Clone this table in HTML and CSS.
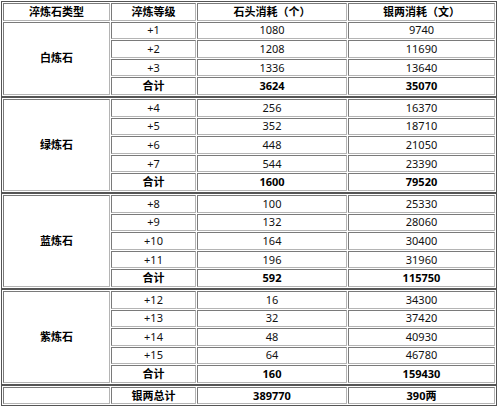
FILE: index.html
```html
<!DOCTYPE html>
<html>
<head>
<meta charset="utf-8">
<link rel="stylesheet" href="styles.css">
</head>
<body>
<div class="sheet">
<table class="grp">
  <colgroup><col class="c1"><col class="c2"><col class="c3"><col class="c4"></colgroup>
  <tr class="head"><td>淬炼石类型</td><td>淬炼等级</td><td>石头消耗（个）</td><td>银两消耗（文）</td></tr>
  <tr><td rowspan="4" class="name">白炼石</td><td>+1</td><td>1080</td><td>9740</td></tr>
  <tr><td>+2</td><td>1208</td><td>11690</td></tr>
  <tr><td>+3</td><td>1336</td><td>13640</td></tr>
  <tr class="sum"><td>合计</td><td>3624</td><td>35070</td></tr>
</table>
<table class="grp">
  <colgroup><col class="c1"><col class="c2"><col class="c3"><col class="c4"></colgroup>
  <tr><td rowspan="5" class="name">绿炼石</td><td>+4</td><td>256</td><td>16370</td></tr>
  <tr><td>+5</td><td>352</td><td>18710</td></tr>
  <tr><td>+6</td><td>448</td><td>21050</td></tr>
  <tr><td>+7</td><td>544</td><td>23390</td></tr>
  <tr class="sum"><td>合计</td><td>1600</td><td>79520</td></tr>
</table>
<table class="grp">
  <colgroup><col class="c1"><col class="c2"><col class="c3"><col class="c4"></colgroup>
  <tr><td rowspan="5" class="name">蓝炼石</td><td>+8</td><td>100</td><td>25330</td></tr>
  <tr><td>+9</td><td>132</td><td>28060</td></tr>
  <tr><td>+10</td><td>164</td><td>30400</td></tr>
  <tr><td>+11</td><td>196</td><td>31960</td></tr>
  <tr class="sum"><td>合计</td><td>592</td><td>115750</td></tr>
</table>
<table class="grp">
  <colgroup><col class="c1"><col class="c2"><col class="c3"><col class="c4"></colgroup>
  <tr><td rowspan="5" class="name">紫炼石</td><td>+12</td><td>16</td><td>34300</td></tr>
  <tr><td>+13</td><td>32</td><td>37420</td></tr>
  <tr><td>+14</td><td>48</td><td>40930</td></tr>
  <tr><td>+15</td><td>64</td><td>46780</td></tr>
  <tr class="sum"><td>合计</td><td>160</td><td>159430</td></tr>
</table>
<table class="grp">
  <colgroup><col class="c1"><col class="c2"><col class="c3"><col class="c4"></colgroup>
  <tr class="sum"><td></td><td>银两总计</td><td>389770</td><td>390两</td></tr>
</table>
</div>
</body>
</html>
```
FILE: styles.css
```css
html, body {
  margin: 0;
  padding: 0;
  background: #fff;
}
.sheet {
  padding: 1px 0 0 1px;
  font-family: "Noto Sans", "Noto Sans CJK SC", sans-serif;
  font-size: 11px;
  color: #111;
}
.grp {
  width: 496px;
  table-layout: fixed;
  border-collapse: separate;
  border-spacing: 1px;
  border: 1px solid #555;
  background: #fff;
}
.c1 { width: 107px; }
.c2 { width: 85px; }
.c3 { width: 150px; }
.c4 { width: 147px; }
.grp td {
  box-sizing: border-box;
  height: 17.6px;
  padding: 0;
  border: 1px solid;
  border-color: #7a7a7a #b4b4b4 #b4b4b4 #7a7a7a;
  text-align: center;
  vertical-align: middle;
  line-height: 14px;
  white-space: nowrap;
}
.head td,
.sum td,
.grp td.name {
  font-weight: bold;
  color: #000;
}
```
